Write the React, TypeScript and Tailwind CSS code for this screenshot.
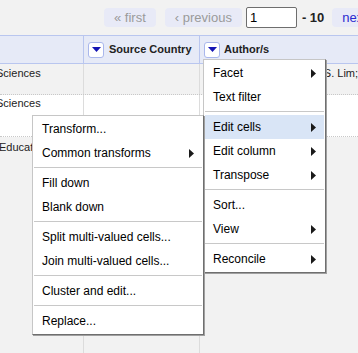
function DropButton() {
  return (
    <span className="flex h-[16px] w-[16px] shrink-0 items-center justify-center rounded-[3px] border border-[#a9b7ec] bg-white">
      <svg width="9" height="5" viewBox="0 0 9 5">
        <polygon points="0,0 9,0 4.5,5" fill="#1414b4" />
      </svg>
    </span>
  );
}

function Arrow() {
  return (
    <svg width="5" height="9" viewBox="0 0 5 9" className="shrink-0">
      <polygon points="0,0 5,4.5 0,9" fill="#1a1a1a" />
    </svg>
  );
}

type Entry = { label: string; sub?: boolean; active?: boolean } | 'sep';

function Menu({ items, className }: { items: Entry[]; className: string }) {
  return (
    <div
      className={`absolute border border-[#c6c6c6] border-r-[#6f6f6f] border-b-[#6f6f6f] bg-white p-px text-[12px] text-black shadow-[1px_1px_0_#a0a0a0] ${className}`}
    >
      {items.map((item, i) =>
        item === 'sep' ? (
          <div key={i} className="mt-[2px] mb-[3px] h-px bg-[#c8c8c8]" />
        ) : (
          <div
            key={item.label}
            className={`flex h-[24px] items-center justify-between pl-[8px] pr-[8px] ${item.active ? 'bg-[#d9e5f6]' : ''}`}
          >
            <span>{item.label}</span>
            {item.sub && <Arrow />}
          </div>
        ),
      )}
    </div>
  );
}

const columnMenu: Entry[] = [
  { label: 'Facet', sub: true },
  { label: 'Text filter' },
  'sep',
  { label: 'Edit cells', sub: true, active: true },
  { label: 'Edit column', sub: true },
  { label: 'Transpose', sub: true },
  'sep',
  { label: 'Sort...' },
  { label: 'View', sub: true },
  'sep',
  { label: 'Reconcile', sub: true },
];

const editCellsMenu: Entry[] = [
  { label: 'Transform...' },
  { label: 'Common transforms', sub: true },
  'sep',
  { label: 'Fill down' },
  { label: 'Blank down' },
  'sep',
  { label: 'Split multi-valued cells...' },
  { label: 'Join multi-valued cells...' },
  'sep',
  { label: 'Cluster and edit...' },
  'sep',
  { label: 'Replace...' },
];

export default function App() {
  return (
    <div className="relative flex h-[353px] w-[358px] flex-col overflow-hidden bg-[#f2f2f2] font-['Liberation_Sans',Arial,sans-serif]">
      {/* pager */}
      <div className="flex h-[35px] shrink-0 items-center whitespace-nowrap pl-[104px] text-[13px]">
        <span className="shrink-0 rounded-[4px] bg-[#e8eaf7] px-[10px] leading-[19px] text-[#9a9a9a]">« first</span>
        <span className="ml-[9px] shrink-0 rounded-[4px] bg-[#e8eaf7] px-[10px] leading-[19px] text-[#9a9a9a]">‹ previous</span>
        <span className="ml-[4px] flex h-[21px] w-[51px] shrink-0 items-center rounded-[2px] border border-[#6e6e6e] bg-white pl-[3px] text-black">
          1
        </span>
        <span className="ml-[5px] shrink-0 font-bold text-[#222]">- 10</span>
        <span className="ml-[8px] shrink-0 rounded-[4px] bg-[#e8eaf7] px-[10px] leading-[19px] text-[#2a2ad0]">next ›</span>
      </div>

      {/* header */}
      <div className="grid h-[29px] shrink-0 grid-cols-[84px_116px_1fr] border-y border-[#b9c6ef] bg-[#e6eaf7] text-[11px] font-bold text-[#222]">
        <div className="border-r border-[#b9c6ef]" />
        <div className="flex items-center border-r border-[#b9c6ef] pl-[4px]">
          <DropButton />
          <span className="ml-[5px] whitespace-nowrap">Source Country</span>
        </div>
        <div className="flex items-center pl-[4px]">
          <DropButton />
          <span className="ml-[4px] whitespace-nowrap">Author/s</span>
        </div>
      </div>

      {/* rows */}
      <div className="grid h-[31px] shrink-0 grid-cols-[84px_116px_1fr] border-b border-dotted border-[#c8c8c8] bg-[#f2f2f2] text-[11px] leading-[15px] text-[#222]">
        <div className="overflow-hidden whitespace-nowrap border-r border-[#dcdcdc] pt-[2px]">
          <span className="-ml-[4px] block">Sciences</span>
        </div>
        <div className="border-r border-[#dcdcdc]" />
        <div className="overflow-hidden whitespace-nowrap pl-[4px] pt-[2px]">I. Abdullah; N. Chandra; S. Lim; P. Ong</div>
      </div>
      <div className="grid h-[42px] shrink-0 grid-cols-[84px_116px_1fr] border-b border-dotted border-[#c8c8c8] bg-white text-[11px] leading-[15px] text-[#222]">
        <div className="overflow-hidden whitespace-nowrap border-r border-[#dcdcdc] pt-[1px]">
          <span className="-ml-[4px] block">Sciences</span>
        </div>
        <div className="border-r border-[#dcdcdc]" />
        <div />
      </div>
      <div className="grid flex-1 grid-cols-[84px_116px_1fr] bg-[#f2f2f2] text-[11px] leading-[15px] text-[#222]">
        <div className="overflow-hidden whitespace-nowrap border-r border-[#dcdcdc] pt-[3px]">
          <span className="-ml-[1px] block">Education</span>
        </div>
        <div className="border-r border-[#dcdcdc]" />
        <div />
      </div>

      <Menu items={columnMenu} className="left-[203px] top-[59px] w-[123px]" />
      <Menu items={editCellsMenu} className="left-[32px] top-[115px] w-[172px]" />
    </div>
  );
}
